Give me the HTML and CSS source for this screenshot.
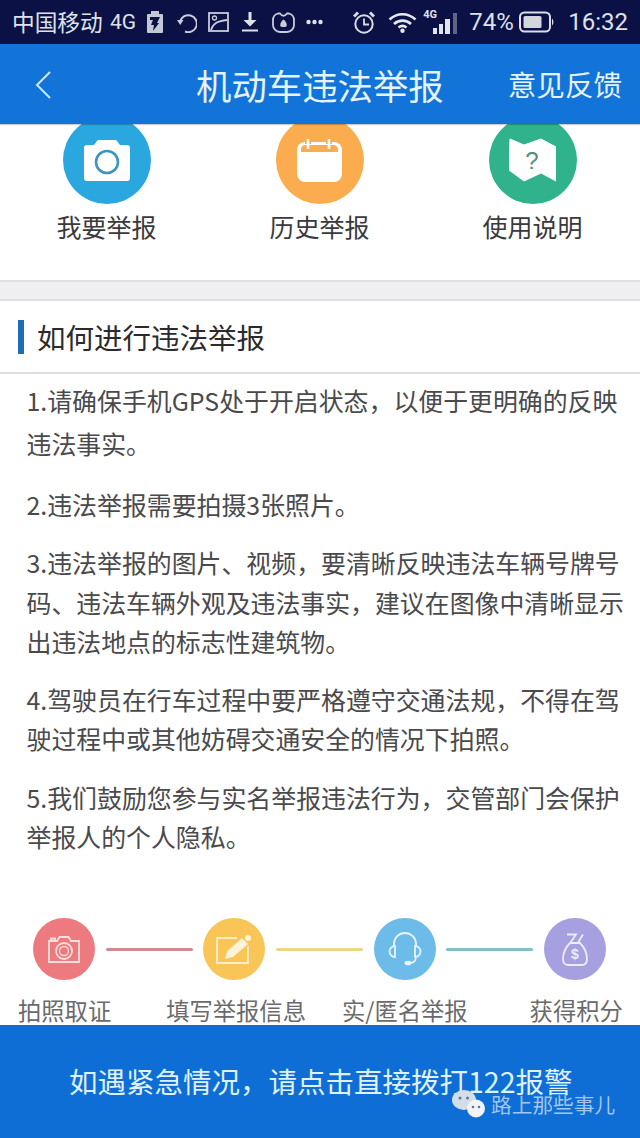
FILE: index.html
```html
<!DOCTYPE html>
<html lang="zh">
<head>
<meta charset="utf-8">
<title>机动车违法举报</title>
<link rel="stylesheet" href="styles.css">
</head>
<body>
<div class="page">
  <div class="status">
    <span class="carrier">中国移动</span>
    <span class="net">4G</span>
    <svg class="si s0" width="16" height="22" viewBox="0 0 16 22"><rect x="0" y="3" width="16" height="19" rx="1" fill="#c4c7d4"/><rect x="4" y="0" width="8" height="4" fill="#c4c7d4"/><path d="M3 6h10l-3 6h2l-6 8 1-6H4l2-5H3z" fill="#0b1145"/></svg>
    <svg class="si s1" width="20" height="21" viewBox="0 0 20 21"><path d="M3 10 A8.500 8.500 0 1 1 8 19.500" fill="none" stroke="#c9ccda" stroke-width="2"/><path d="M0 8 H6.500 L3.200 13z" fill="#c9ccda"/></svg>
    <svg class="si s2" width="21" height="20" viewBox="0 0 21 20"><rect x="1" y="1" width="19" height="18" fill="none" stroke="#c9ccda" stroke-width="1.800"/><path d="M3 18 C5 11 10 9 19 8" fill="none" stroke="#c9ccda" stroke-width="1.800"/><circle cx="6.500" cy="6" r="2" fill="none" stroke="#c9ccda" stroke-width="1.300"/></svg>
    <svg class="si s3" width="16" height="20" viewBox="0 0 16 20"><path d="M6.500 0h3v8h5L8 14.500 1.500 8h5z" fill="#dfe1ea"/><rect x="0" y="17.500" width="16" height="2" fill="#dfe1ea"/></svg>
    <svg class="si s4" width="23" height="21" viewBox="0 0 23 21"><path d="M6 1.500 H8 Q11.500 6 15 1.500 H17 Q22 3 22 8 V13 A7 7 0 0 1 15 20 H8 A7 7 0 0 1 1 13 V8 Q1 3 6 1.500z" fill="none" stroke="#c9ccda" stroke-width="1.800"/><path d="M11.500 7.500 C15 10 16 15 13 15 H10 C7 15 8 10 11.500 7.500z" fill="#c9ccda"/></svg>
    <svg class="si s7" width="17" height="6" viewBox="0 0 17 6"><circle cx="2.500" cy="3" r="2.200" fill="#dfe1ea"/><circle cx="8.500" cy="3" r="2.200" fill="#dfe1ea"/><circle cx="14.500" cy="3" r="2.200" fill="#dfe1ea"/></svg>
    <span class="grow"></span>
    <svg class="si" width="22" height="23" viewBox="0 0 22 23"><circle cx="11" cy="13" r="8.700" fill="none" stroke="#d8dae4" stroke-width="2"/><path d="M11 7.500v6h5" fill="none" stroke="#d8dae4" stroke-width="1.800"/><path d="M1 5.500 L5 1.500M21 5.500 L17 1.500" stroke="#d8dae4" stroke-width="3"/></svg>
    <svg class="si s5" width="29" height="21" viewBox="0 0 29 21"><path d="M1.500 7.500 C9 0.500 20 0.500 27.500 7.500M6 12 C11 7.500 18 7.500 23 12M10.500 15.500 C13 13.500 16 13.500 18.500 15.500" fill="none" stroke="#e6e8ef" stroke-width="2.600"/><circle cx="14.500" cy="18.800" r="2.200" fill="#e6e8ef"/></svg>
    <span class="sig"><span class="sig4">4G</span><span class="bar b1"></span><span class="bar b2"></span><span class="bar b3"></span><span class="bar b4"></span></span>
    <span class="pct">74%</span>
    <svg class="si s6" width="36" height="22" viewBox="0 0 36 22"><rect x="1" y="1.500" width="30" height="19" rx="4.500" fill="none" stroke="#dcdee8" stroke-width="2"/><rect x="4.500" y="5" width="18" height="12" rx="1.500" fill="#d4d6de"/><path d="M33 7.500 A5 5 0 0 1 33 14.500z" fill="#dcdee8"/></svg>
    <span class="time">16:32</span>
  </div>

  <header class="top">
    <svg class="back" width="18" height="30" viewBox="0 0 18 30"><path d="M16 2 L3 15 L16 28" fill="none" stroke="#cfe6fa" stroke-width="2"/></svg>
    <h1 class="title">机动车违法举报</h1>
    <span class="feedback">意见反馈</span>
  </header>

  <section class="actions">
    <div class="action">
      <div class="disc blue">
        <svg width="46" height="41" viewBox="0 0 46 41"><path d="M3 5 H10 L13 1 Q13.500 0 15 0 H31 Q32.500 0 33 1 L36 5 H43 Q46 5 46 8 V38 Q46 41 43 41 H3 Q0 41 0 38 V8 Q0 5 3 5z" fill="#fff"/><circle cx="23" cy="22" r="11" fill="none" stroke="#3d94bd" stroke-width="2.600"/></svg>
      </div>
      <span>我要举报</span>
    </div>
    <div class="action">
      <div class="disc orange">
        <svg width="45" height="43" viewBox="0 0 45 43"><rect x="0" y="3" width="45" height="40" rx="8" fill="#fff"/><path d="M4 13 V11 Q4 6 9 6 H36 Q41 6 41 11 V13z" fill="#fbac4e"/><rect x="8" y="0" width="6" height="5" fill="#fbac4e"/><rect x="29" y="0" width="6" height="5" fill="#fbac4e"/><rect x="9.700" y="0" width="2.600" height="10" fill="#fff"/><rect x="30.700" y="0" width="2.600" height="10" fill="#fff"/></svg>
      </div>
      <span>历史举报</span>
    </div>
    <div class="action">
      <div class="disc green">
        <svg width="47" height="44" viewBox="0 0 47 44"><path d="M1 1 L15 7 L32 1 L47 9 V43 L32 35 L15 43 L0 32z" fill="#fff" stroke="#fff" stroke-linejoin="round"/><text x="23" y="31" class="q">?</text></svg>
      </div>
      <span>使用说明</span>
    </div>
  </section>

  <div class="band"></div>

  <section class="howto">
    <h2 class="head"><span class="mark"></span>如何进行违法举报</h2>
    <div class="copy">
      <p class="wide">1.请确保手机GPS处于开启状态，以便于更明确的反映违法事实。</p>
      <p>2.违法举报需要拍摄3张照片。</p>
      <p>3.违法举报的图片、视频，要清晰反映违法车辆号牌号码、违法车辆外观及违法事实，建议在图像中清晰显示出违法地点的标志性建筑物。</p>
      <p>4.驾驶员在行车过程中要严格遵守交通法规，不得在驾驶过程中或其他妨碍交通安全的情况下拍照。</p>
      <p>5.我们鼓励您参与实名举报违法行为，交管部门会保护举报人的个人隐私。</p>
    </div>
  </section>

  <section class="flow">
    <div class="steps">
      <div class="dot red"><svg width="34" height="27" viewBox="0 0 34 27"><path d="M2 5 H10 L12.500 1 H21.500 L24 5 H32 V26 H2z M4 5 V2.500 H8 V5" fill="none" stroke="#fbdfdd" stroke-width="1.800"/><circle cx="17" cy="15" r="8" fill="none" stroke="#fbdfdd" stroke-width="1.800"/><circle cx="17" cy="15" r="4.500" fill="none" stroke="#fbdfdd" stroke-width="1.300"/></svg></div>
      <span class="line lred"></span>
      <div class="dot yellow"><svg width="36" height="30" viewBox="0 0 36 30"><path d="M21 4 H1 V29 H32 V12" fill="none" stroke="#fdeec8" stroke-width="1.800"/><path d="M9 25 L11 17.500 L26 4 L32 10 L17 23z" fill="#fdf3da"/><circle cx="32" cy="4" r="3" fill="#fdf3da"/></svg></div>
      <span class="line lyellow"></span>
      <div class="dot sky"><svg width="34" height="34" viewBox="0 0 34 34"><path d="M6 14 V12 A11 11 0 0 1 28 12 V14" fill="none" stroke="#e6f4fb" stroke-width="1.800"/><path d="M7 14 V25 A5.500 5.500 0 0 1 7 14z M27 14 A5.500 5.500 0 0 1 27 25z" fill="none" stroke="#e6f4fb" stroke-width="1.800"/><path d="M28 26 Q27 31 22 31" fill="none" stroke="#e6f4fb" stroke-width="1.600"/><ellipse cx="20" cy="31" rx="3.500" ry="2.300" fill="#e6f4fb"/></svg></div>
      <span class="line lsky"></span>
      <div class="dot violet"><svg width="26" height="33" viewBox="0 0 26 33"><path d="M5 1.500 H14 L8.500 9.500 M21 1.500 L16 9.500" fill="none" stroke="#eeecfa" stroke-width="1.800"/><path d="M8 10 H18 C23 15 25 20 25 26 C25 30 23 32 20 32 H6 C3 32 1 30 1 26 C1 20 3 15 8 10z" fill="none" stroke="#eeecfa" stroke-width="1.800"/><text x="13" y="26" class="dollar">$</text></svg></div>
    </div>
    <div class="labels">
      <span class="l1">拍照取证</span>
      <span class="l2">填写举报信息</span>
      <span class="l3">实/匿名举报</span>
      <span class="l4">获得积分</span>
    </div>
  </section>

  <footer class="call">
    <span class="call-text">如遇紧急情况，请点击直接拨打122报警</span>
    <div class="mark-wm">
      <svg width="33" height="28" viewBox="0 0 33 28"><ellipse cx="12" cy="10" rx="12" ry="10" fill="#d4dee8"/><ellipse cx="24" cy="18.500" rx="9" ry="9" fill="#f2f4f6"/><circle cx="8" cy="8" r="1.500" fill="#5a7a9a"/><circle cx="15.500" cy="8" r="1.500" fill="#5a7a9a"/><circle cx="21" cy="17" r="1.300" fill="#5a7a9a"/><circle cx="27" cy="17" r="1.300" fill="#5a7a9a"/></svg>
      <span>路上那些事儿</span>
    </div>
  </footer>
</div>
</body>
</html>
```

FILE: styles.css
```css
* { box-sizing: border-box; }
html, body { margin: 0; padding: 0; }
body { font-family: "Noto Sans CJK SC", "Noto Sans", sans-serif; background: #fff; }
.page { width: 640px; height: 1138px; overflow: hidden; display: flex; flex-direction: column; background: #fff; }

.status { height: 44px; flex: none; background: #0b1145; color: #dfe1ea; display: flex; align-items: center; padding: 0 12px; }
.carrier { font-size: 22.7px; line-height: 1; width: 91px; white-space: nowrap; }
.net { font-family: Roboto, sans-serif; font-size: 21px; margin-left: 7px; width: 27px; }
.si { flex: none; display: block; }
.s0 { margin-left: 10px; }
.s1 { margin-left: 14px; }
.s2 { margin-left: 11px; }
.s3 { margin-left: 13px; }
.s4 { margin-left: 14px; }
.s7 { margin-left: 11px; }
.grow { flex: 1; }
.s5 { margin-left: 13px; }
.sig { position: relative; width: 34px; height: 25px; margin-left: 6px; margin-top: -1px; display: flex; align-items: flex-end; justify-content: flex-end; gap: 2px; }
.sig4 { position: absolute; left: 0; top: 0; font-family: Roboto, sans-serif; font-size: 11px; font-weight: 700; line-height: 1; }
.bar { width: 4px; background: #e2e4ec; display: block; }
.b1 { height: 6px; }
.b2 { height: 10px; }
.b3 { height: 15px; width: 5px; }
.b4 { height: 21px; margin-left: 1px; opacity: .4; }
.pct { font-family: Roboto, sans-serif; font-size: 24px; margin-left: 12px; width: 47px; white-space: nowrap; }
.s6 { margin-left: 3px; }
.time { font-family: Roboto, sans-serif; font-size: 24px; margin-left: 13px; }

.top { height: 80px; flex: none; background: #1273d8; color: #e4f3fc; display: flex; align-items: center; position: relative; box-shadow: 0 1px 1px rgba(0,0,0,.2); z-index: 2; }
.back { margin-left: 34px; margin-top: 2px; flex: none; }
.title { margin: 2px 0 0 144px; font-size: 35.4px; font-weight: 400; line-height: 1; white-space: nowrap; }
.feedback { margin-left: 64px; font-size: 28.6px; line-height: 1; white-space: nowrap; }

.actions { height: 156px; flex: none; display: flex; overflow: hidden; }
.action { width: 213px; display: flex; flex-direction: column; align-items: center; font-size: 25px; color: #3a3a3c; line-height: 1; }
.action > span { margin-top: 10px; white-space: nowrap; }
.disc { width: 88px; height: 88px; flex: none; border-radius: 50%; margin-top: -8px; display: flex; align-items: center; justify-content: center; }
.blue { background: #2ba7df; }
.orange { background: #fbac4e; }
.green { background: #30b38d; }
.q { font-family: "Liberation Sans", sans-serif; font-size: 24px; fill: #4d8f80; text-anchor: middle; }

.band { height: 21px; flex: none; background: #efeff1; border-top: 2px solid #e0e0e2; border-bottom: 2px solid #e0e0e2; }

.howto { flex: 1; min-height: 0; overflow: hidden; }
.head { margin: 0; height: 73px; padding: 1px 0 0 18px; border-bottom: 2px solid #dedee0; font-size: 28.5px; font-weight: 400; color: #2b2b2d; display: flex; align-items: center; line-height: 1; }
.mark { width: 6px; height: 34px; background: #1c6db4; margin-right: 13px; flex: none; }
.copy { padding: 5px 14px 0 26.5px; font-size: 24.9px; line-height: 39.3px; color: #4a4a4c; }
.copy p { margin: 0 0 19px; }
.copy .wide { line-height: 43px; margin-bottom: 20px; }

.flow { height: 107px; flex: none; }
.steps { display: flex; align-items: center; padding-left: 33px; }
.dot { width: 62px; height: 62px; flex: none; border-radius: 50%; display: flex; align-items: center; justify-content: center; }
.red { background: #ec7a7e; }
.yellow { background: #f9c557; }
.sky { background: #6dbbe8; }
.violet { background: #a69fe0; }
.line { width: 87.300px; height: 3px; flex: none; margin: 0 10.500px; border-radius: 2px; }
.lred { background: #cf8b94; }
.lyellow { background: #eed585; }
.lsky { background: #82bfc6; }
.labels { margin-top: 17px; height: 28px; font-size: 23.3px; line-height: 26px; color: #6a6a6c; display: flex; padding-left: 18px; white-space: nowrap; }
.l2 { margin-left: 55px; }
.l3 { margin-left: 36px; }
.l4 { margin-left: 62px; }
.dollar { font-family: "Liberation Sans", sans-serif; font-size: 14px; font-weight: 700; fill: #eeecfa; text-anchor: middle; }

.call { height: 113px; flex: none; background: #0f6ed6; position: relative; padding: 33px 0 0 69px; color: #dff2fb; font-size: 28.5px; line-height: 46px; white-space: nowrap; }
.call-text { display: block; }
.mark-wm { position: absolute; left: 452px; top: 65px; display: flex; align-items: center; gap: 6px; color: rgba(190, 216, 240, .85); font-size: 20.7px; line-height: 28px; }
```
